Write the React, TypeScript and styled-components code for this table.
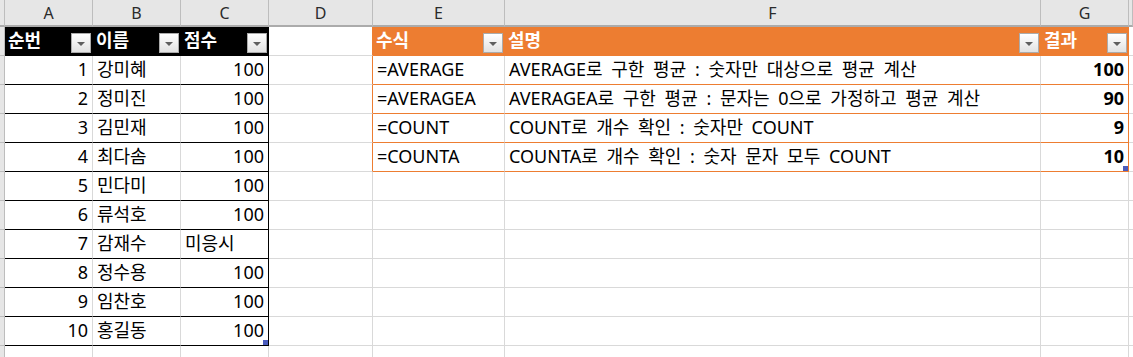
import React from 'react';
import styled, { createGlobalStyle } from 'styled-components';

const GlobalStyle = createGlobalStyle`
  html, body { margin: 0; padding: 0; background: #fff; }
  body { font-family: "Noto Sans", "Noto Sans CJK KR", sans-serif; }
`;

const COLS = '5px 88px 88px 88px 104px 132px 536px 88px 1fr';
const GRID = '#d9d9d9';
const ORANGE = '#ED7D31';
const BLACK = '#000';

const Sheet = styled.div`
  width: 1133px;
  height: 357px;
  overflow: hidden;
  background: #fff;
`;

const ColHeaderRow = styled.div`
  display: grid;
  grid-template-columns: ${COLS};
  height: 27px;
`;

const ColHeaderCell = styled.div`
  box-sizing: border-box;
  background: #e6e6e6;
  border-right: 1px solid #bdbdbd;
  border-bottom: 2px solid #ababab;
  display: flex;
  align-items: center;
  justify-content: center;
  font-family: "Noto Sans", sans-serif;
  font-size: 16px;
  color: #2b2b2b;
  padding-top: 1px;
`;

const Row = styled.div`
  display: grid;
  grid-template-columns: ${COLS};
  height: 29px;
`;

const Gutter = styled.div`
  box-sizing: border-box;
  background: #e6e6e6;
  border-right: 1px solid #bdbdbd;
  border-bottom: 1px solid #bdbdbd;
`;

type CellProps = {
  $bg?: string;
  $bb?: string;
  $br?: string;
  $align?: 'left' | 'right';
  $bold?: boolean;
  $fg?: string;
};

const Cell = styled.div<CellProps>`
  position: relative;
  box-sizing: border-box;
  display: flex;
  align-items: flex-end;
  justify-content: ${(p) => (p.$align === 'right' ? 'flex-end' : 'flex-start')};
  padding: 0 4px 6px 4px;
  background: ${(p) => p.$bg ?? '#fff'};
  border-right: 1px solid ${(p) => p.$br ?? GRID};
  border-bottom: 1px solid ${(p) => p.$bb ?? GRID};
  color: ${(p) => p.$fg ?? '#000'};
  font-weight: ${(p) => (p.$bold ? 700 : 400)};
  font-size: 18px;
  word-spacing: 4px;
  line-height: 1;
  white-space: nowrap;
  overflow: visible;
`;

const HeadCell = styled(Cell)`
  justify-content: space-between;
  padding: 0 1px 6px 3px;
  font-weight: 700;
  color: #fff;
`;

const FilterButton = styled.span`
  box-sizing: border-box;
  flex: none;
  width: 20px;
  height: 20px;
  margin-bottom: -4px;
  border: 1px solid #ababab;
  background: linear-gradient(#ffffff, #e2e2e2);
  display: flex;
  align-items: center;
  justify-content: center;
  padding-top: 2px;

  &::after {
    content: '';
    width: 0;
    height: 0;
    border-left: 4px solid transparent;
    border-right: 4px solid transparent;
    border-top: 4px solid #5f5f5f;
  }
`;

const Handle = styled.span`
  position: absolute;
  right: 0;
  bottom: 0;
  width: 5px;
  height: 5px;
  background: #4a5bbd;
`;

const left = [
  ['1', '강미혜', '100'],
  ['2', '정미진', '100'],
  ['3', '김민재', '100'],
  ['4', '최다솜', '100'],
  ['5', '민다미', '100'],
  ['6', '류석호', '100'],
  ['7', '감재수', '미응시'],
  ['8', '정수용', '100'],
  ['9', '임찬호', '100'],
  ['10', '홍길동', '100'],
];

const right = [
  ['=AVERAGE', 'AVERAGE로 구한 평균 : 숫자만 대상으로 평균 계산', '100'],
  ['=AVERAGEA', 'AVERAGEA로 구한 평균 : 문자는 0으로 가정하고 평균 계산', '90'],
  ['=COUNT', 'COUNT로 개수 확인 : 숫자만 COUNT', '9'],
  ['=COUNTA', 'COUNTA로 개수 확인 : 숫자 문자 모두 COUNT', '10'],
];

const letters = ['A', 'B', 'C', 'D', 'E', 'F', 'G', ''];

export default function App() {
  return (
    <>
      <GlobalStyle />
      <Sheet>
        <ColHeaderRow>
          <ColHeaderCell />
          {letters.map((l, i) => (
            <ColHeaderCell key={i}>{l}</ColHeaderCell>
          ))}
        </ColHeaderRow>

        <Row>
          <Gutter />
          <HeadCell $bg={BLACK} $bb={BLACK} $br={BLACK}>
            순번<FilterButton />
          </HeadCell>
          <HeadCell $bg={BLACK} $bb={BLACK} $br={BLACK}>
            이름<FilterButton />
          </HeadCell>
          <HeadCell $bg={BLACK} $bb={BLACK} $br={BLACK}>
            점수<FilterButton />
          </HeadCell>
          <Cell $br={ORANGE} />
          <HeadCell $bg={ORANGE} $bb={ORANGE} $br={ORANGE}>
            수식<FilterButton />
          </HeadCell>
          <HeadCell $bg={ORANGE} $bb={ORANGE} $br={ORANGE}>
            설명<FilterButton />
          </HeadCell>
          <HeadCell $bg={ORANGE} $bb={ORANGE} $br={ORANGE}>
            결과<FilterButton />
          </HeadCell>
          <Cell />
        </Row>

        {left.map((r, i) => {
          const rr = right[i];
          const lastLeft = i === left.length - 1;
          const lastRight = i === right.length - 1;
          return (
            <Row key={i}>
              <Gutter />
              <Cell $align="right" $bb={BLACK}>{r[0]}</Cell>
              <Cell $bb={BLACK}>{r[1]}</Cell>
              <Cell $align={r[2] === '미응시' ? 'left' : 'right'} $bb={BLACK} $br={BLACK}>
                {r[2]}
                {lastLeft && <Handle />}
              </Cell>
              {rr ? (
                <>
                  <Cell $br={ORANGE} />
                  <Cell $bb={ORANGE}>{rr[0]}</Cell>
                  <Cell $bb={ORANGE}>{rr[1]}</Cell>
                  <Cell $align="right" $bold $bb={ORANGE} $br={ORANGE}>
                    {rr[2]}
                    {lastRight && <Handle />}
                  </Cell>
                </>
              ) : (
                <>
                  <Cell />
                  <Cell />
                  <Cell />
                  <Cell />
                </>
              )}
              <Cell />
            </Row>
          );
        })}

        <Row>
          <Gutter />
          <Cell />
          <Cell />
          <Cell />
          <Cell />
          <Cell />
          <Cell />
          <Cell />
          <Cell />
        </Row>
      </Sheet>
    </>
  );
}
